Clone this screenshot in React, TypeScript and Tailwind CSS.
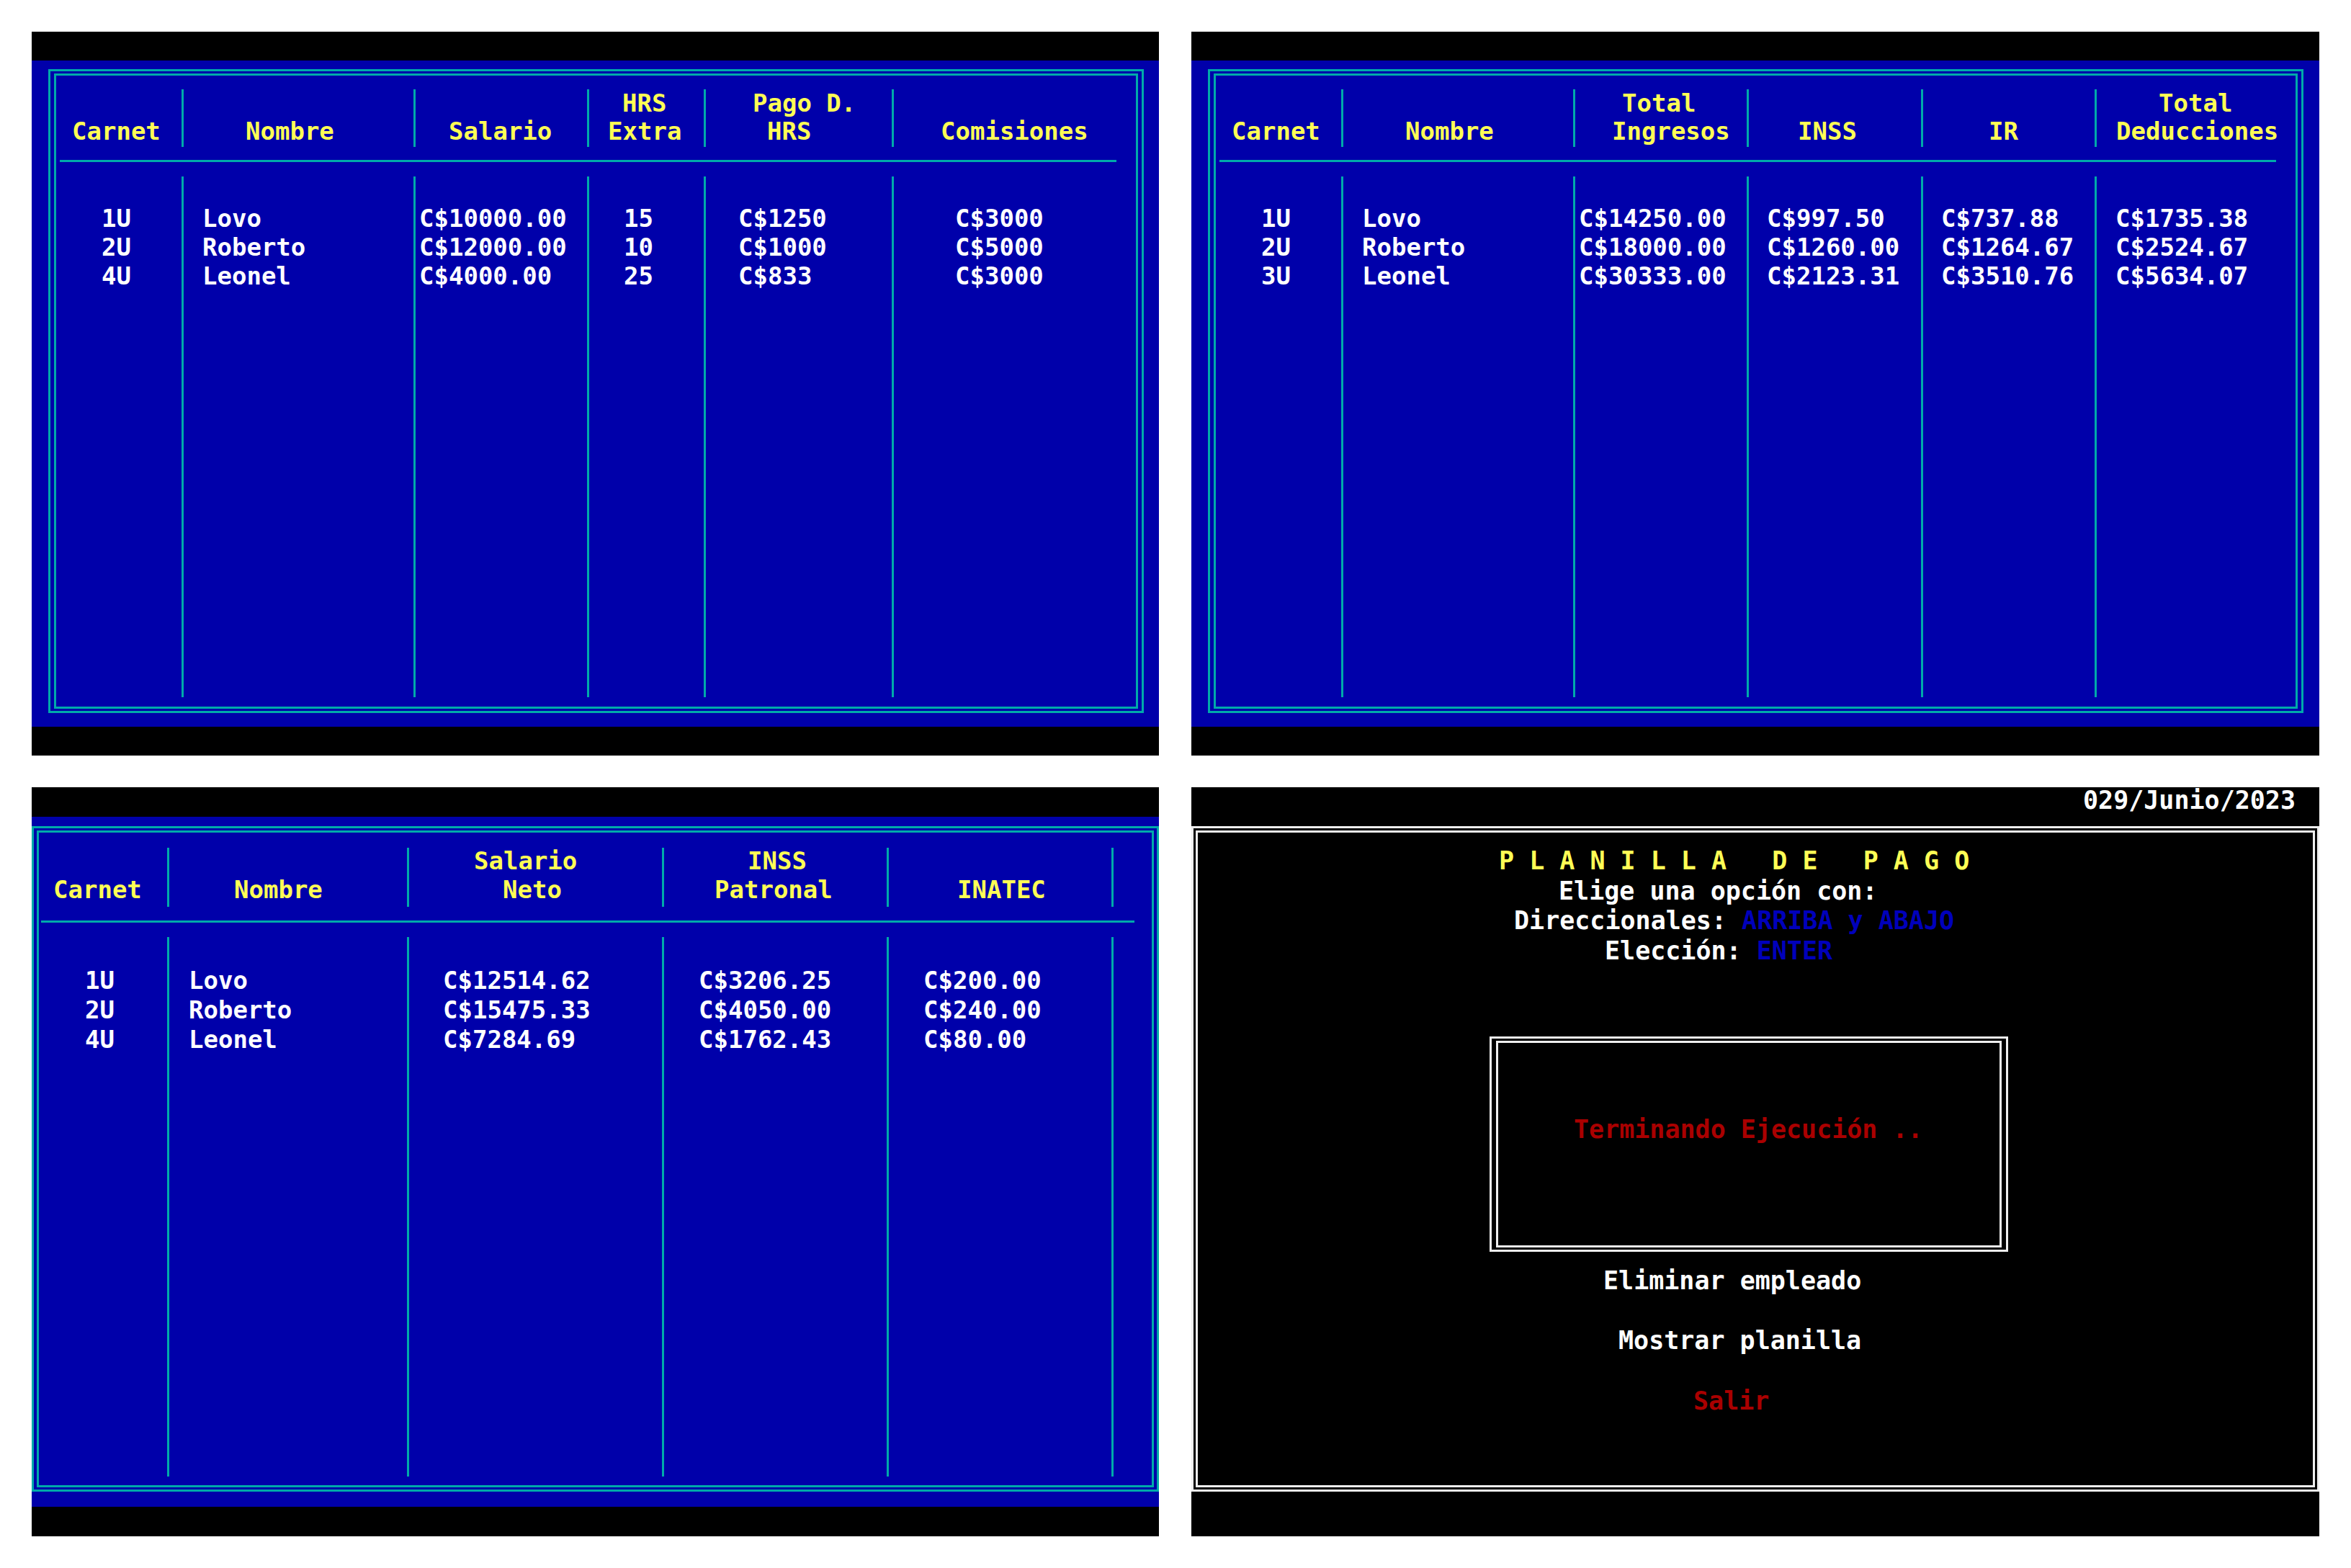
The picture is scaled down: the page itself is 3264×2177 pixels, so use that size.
import React from 'react';

type Col = {
  h1?: [string, string];
  h2?: [string, string];
  d?: [string[], string];
};

type Variant = {
  panelH: string;
  barH: string;
  bluePad: string;
  outerPad: string;
  headerMt: string;
  headerH: string;
  headerText: string;
  lineH: string;
  ulClass: string;
  bodyMt: string;
  bodyH: string;
  bodyText: string;
};

const topVariantL: Variant = {
  panelH: 'h-[1005px]',
  barH: 'h-[40px]',
  bluePad: 'pt-[12px] pl-[23px] pr-[21px] pb-[19px]',
  outerPad: 'px-[5px] py-[3px]',
  headerMt: 'mt-[19px]',
  headerH: 'h-[80px]',
  headerText: 'leading-[39px]',
  lineH: 'h-[39px]',
  ulClass: 'mt-[18px] h-[3px] ml-[5px] mr-[27px]',
  bodyMt: 'mt-[20px]',
  bodyH: 'h-[723px]',
  bodyText: 'pt-[38px] leading-[40px]',
};

const topVariantR: Variant = {
  ...topVariantL,
  bluePad: 'pt-[12px] pl-[23px] pr-[22px] pb-[19px]',
};

const bottomVariant: Variant = {
  panelH: 'h-[1040px]',
  barH: 'h-[41px]',
  bluePad: 'pt-[13px] pl-0 pr-0 pb-[21px]',
  outerPad: 'px-[4px] py-[3px]',
  headerMt: 'mt-[21px]',
  headerH: 'h-[82px]',
  headerText: 'leading-[40px] -mt-[2px]',
  lineH: 'h-[40px]',
  ulClass: 'mt-[19px] h-[3px] ml-[3px] mr-[24px]',
  bodyMt: 'mt-[20px]',
  bodyH: 'h-[749px]',
  bodyText: 'pt-[40px] leading-[41px]',
};

const tlCols: Col[] = [
  { h2: ['Carnet', 'pl-[22px]'], d: [['1U', '2U', '4U'], 'pl-[63px]'] },
  { h2: ['Nombre', 'pl-[86px]'], d: [['Lovo', 'Roberto', 'Leonel'], 'pl-[26px]'] },
  { h2: ['Salario', 'pl-[46px]'], d: [['C$10000.00', 'C$12000.00', 'C$4000.00'], 'pl-[5px]'] },
  { h1: ['HRS', 'pl-[46px]'], h2: ['Extra', 'pl-[26px]'], d: [['15', '10', '25'], 'pl-[48px]'] },
  { h1: ['Pago D.', 'pl-[65px]'], h2: ['HRS', 'pl-[85px]'], d: [['C$1250', 'C$1000', 'C$833'], 'pl-[45px]'] },
  { h2: ['Comisiones', 'pl-[65px]'], d: [['C$3000', 'C$5000', 'C$3000'], 'pl-[85px]'] },
];

const trCols: Col[] = [
  { h2: ['Carnet', 'pl-[22px]'], d: [['1U', '2U', '3U'], 'pl-[63px]'] },
  { h2: ['Nombre', 'pl-[86px]'], d: [['Lovo', 'Roberto', 'Leonel'], 'pl-[26px]'] },
  { h1: ['Total', 'pl-[65px]'], h2: ['Ingresos', 'pl-[51px]'], d: [['C$14250.00', 'C$18000.00', 'C$30333.00'], 'pl-[5px]'] },
  { h2: ['INSS', 'pl-[68px]'], d: [['C$997.50', 'C$1260.00', 'C$2123.31'], 'pl-[25px]'] },
  { h2: ['IR', 'pl-[91px]'], d: [['C$737.88', 'C$1264.67', 'C$3510.76'], 'pl-[25px]'] },
  { h1: ['Total', 'pl-[86px]'], h2: ['Deducciones', 'pl-[27px]'], d: [['C$1735.38', 'C$2524.67', 'C$5634.07'], 'pl-[26px]'] },
];

const blCols: Col[] = [
  { h2: ['Carnet', 'pl-[20px]'], d: [['1U', '2U', '4U'], 'pl-[64px]'] },
  { h2: ['Nombre', 'pl-[90px]'], d: [['Lovo', 'Roberto', 'Leonel'], 'pl-[27px]'] },
  { h1: ['Salario', 'pl-[90px]'], h2: ['Neto', 'pl-[130px]'], d: [['C$12514.62', 'C$15475.33', 'C$7284.69'], 'pl-[47px]'] },
  { h1: ['INSS', 'pl-[116px]'], h2: ['Patronal', 'pl-[70px]'], d: [['C$3206.25', 'C$4050.00', 'C$1762.43'], 'pl-[48px]'] },
  { h2: ['INATEC', 'pl-[95px]'], d: [['C$200.00', 'C$240.00', 'C$80.00'], 'pl-[48px]'] },
  {},
];

function TablePanel({ cols, grid, v }: { cols: Col[]; grid: string; v: Variant }) {
  return (
    <div className={`flex flex-col ${v.panelH} font-['DejaVu_Sans_Mono',monospace] font-bold text-[34px] whitespace-pre`}>
      <div className={`${v.barH} shrink-0 bg-black`} />
      <div className={`flex-1 min-h-0 bg-[#0000aa] ${v.bluePad}`}>
        <div className={`h-full border-[3px] border-[#00aaaa] ${v.outerPad}`}>
          <div className="flex h-full flex-col border-[3px] border-[#00aaaa]">
            <div className={`grid shrink-0 ${grid} ${v.headerMt} ${v.headerH}`}>
              {cols.map((c, i) => (
                <React.Fragment key={i}>
                  {i > 0 && <div className="bg-[#00aaaa]" />}
                  <div className={`text-[#ffff55] ${v.headerText}`}>
                    <div className={`${v.lineH} ${c.h1 ? c.h1[1] : ''}`}>{c.h1 ? c.h1[0] : '\u00a0'}</div>
                    <div className={`${v.lineH} ${c.h2 ? c.h2[1] : ''}`}>{c.h2 ? c.h2[0] : '\u00a0'}</div>
                  </div>
                </React.Fragment>
              ))}
            </div>
            <div className={`shrink-0 bg-[#00aaaa] ${v.ulClass}`} />
            <div className={`grid shrink-0 ${grid} ${v.bodyMt} ${v.bodyH}`}>
              {cols.map((c, i) => (
                <React.Fragment key={i}>
                  {i > 0 && <div className="bg-[#00aaaa]" />}
                  <div className={`text-white ${v.bodyText} ${c.d ? c.d[1] : ''}`}>
                    {c.d ? c.d[0].map((t, j) => <div key={j}>{t}</div>) : null}
                  </div>
                </React.Fragment>
              ))}
            </div>
          </div>
        </div>
      </div>
      <div className={`${v.barH} shrink-0 bg-black`} />
    </div>
  );
}

function MenuPanel() {
  return (
    <div className="flex h-[1040px] flex-col bg-black font-['DejaVu_Sans_Mono',monospace] font-bold text-[35px] whitespace-pre">
      <div className="flex h-[41px] shrink-0 justify-end pr-[33px]">
        <span className="leading-[36px] text-white">029/Junio/2023</span>
      </div>
      <div className="flex-1 min-h-0 pt-[13px] pb-[21px]">
        <div className="h-full border-[3px] border-[#eeeeee] p-[3px]">
          <div className="flex h-full flex-col border-[3px] border-[#eeeeee]">
            <div className="mt-[19px] leading-[41.5px]">
              <div className="pl-[418px] text-[#ffff55]">P L A N I L L A   D E   P A G O</div>
              <div className="pl-[501px] text-white">Elige una opción con:</div>
              <div className="pl-[439px] text-white">
                Direccionales: <span className="text-[#0000bb]">ARRIBA y ABAJO</span>
              </div>
              <div className="pl-[565px] text-white">
                Elección: <span className="text-[#0000bb]">ENTER</span>
              </div>
            </div>
            <div className="ml-[405px] mt-[98px] h-[299px] w-[720px] shrink-0 border-[3px] border-[#eeeeee] px-[6px] py-[3px]">
              <div className="h-full border-[3px] border-[#eeeeee] pl-[105px] pt-[100px] leading-[41px] text-[#aa0000]">
                Terminando Ejecución ..
              </div>
            </div>
            <div className="mt-[20px] pl-[563px] leading-[41px] text-white">Eliminar empleado</div>
            <div className="mt-[42px] pl-[584px] leading-[41px] text-white">Mostrar planilla</div>
            <div className="mt-[43px] pl-[688px] leading-[41px] text-[#aa0000]">Salir</div>
          </div>
        </div>
      </div>
      <div className="h-[41px] shrink-0 bg-black" />
    </div>
  );
}

export default function App() {
  return (
    <div className="grid h-[2177px] w-[3264px] grid-cols-[1565px_1566px] grid-rows-[1005px_1040px] gap-x-[45px] gap-y-[44px] bg-white pl-[44px] pt-[44px]">
      <TablePanel cols={tlCols} grid="grid-cols-[174px_3px_319px_3px_238px_3px_159px_3px_258px_3px_336px]" v={topVariantL} />
      <TablePanel cols={trCols} grid="grid-cols-[174px_3px_319px_3px_238px_3px_239px_3px_238px_3px_276px]" v={topVariantR} />
      <TablePanel cols={blCols} grid="grid-cols-[178px_3px_330px_3px_351px_3px_309px_3px_309px_3px_53px]" v={bottomVariant} />
      <MenuPanel />
    </div>
  );
}
